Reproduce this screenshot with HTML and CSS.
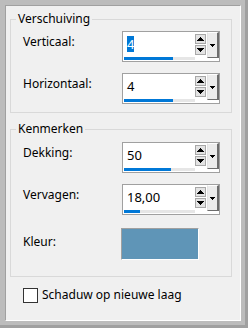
FILE: index.html
```html
<!DOCTYPE html>
<html lang="nl">
<head>
  <meta charset="UTF-8">
  <title>Slagschaduw</title>
  <link rel="stylesheet" href="styles.css">
</head>
<body>
  <div class="window">
    <div class="panel">

      <fieldset class="group">
        <legend>Verschuiving</legend>
        <div class="rows">
          <div class="row">
            <label class="label">Verticaal:</label>
            <div class="spin">
              <div class="field">
                <span class="value selected">4</span>
                <div class="track"><div class="fill" style="width: 49px;"></div></div>
              </div>
              <div class="arrows">
                <span class="arrow"><svg width="7" height="4" viewBox="0 0 7 4"><path d="M3 0h1v1h1v1h1v1h1v1H0V3h1V2h1V1h1z"/></svg></span>
                <span class="arrow"><svg width="7" height="4" viewBox="0 0 7 4"><path d="M0 0h7v1H6v1H5v1H4v1H3V3H2V2H1V1H0z"/></svg></span>
              </div>
              <span class="drop"><svg width="5" height="3" viewBox="0 0 5 3"><path d="M0 0h5v1H4v1H3v1H2V2H1V1H0z"/></svg></span>
            </div>
          </div>
          <div class="row">
            <label class="label">Horizontaal:</label>
            <div class="spin">
              <div class="field">
                <span class="value">4</span>
                <div class="track"><div class="fill" style="width: 49px;"></div></div>
              </div>
              <div class="arrows">
                <span class="arrow"><svg width="7" height="4" viewBox="0 0 7 4"><path d="M3 0h1v1h1v1h1v1h1v1H0V3h1V2h1V1h1z"/></svg></span>
                <span class="arrow"><svg width="7" height="4" viewBox="0 0 7 4"><path d="M0 0h7v1H6v1H5v1H4v1H3V3H2V2H1V1H0z"/></svg></span>
              </div>
              <span class="drop"><svg width="5" height="3" viewBox="0 0 5 3"><path d="M0 0h5v1H4v1H3v1H2V2H1V1H0z"/></svg></span>
            </div>
          </div>
        </div>
      </fieldset>

      <fieldset class="group group-second">
        <legend>Kenmerken</legend>
        <div class="rows rows-second">
          <div class="row">
            <label class="label">Dekking:</label>
            <div class="spin">
              <div class="field">
                <span class="value">50</span>
                <div class="track"><div class="fill" style="width: 47px;"></div></div>
              </div>
              <div class="arrows">
                <span class="arrow"><svg width="7" height="4" viewBox="0 0 7 4"><path d="M3 0h1v1h1v1h1v1h1v1H0V3h1V2h1V1h1z"/></svg></span>
                <span class="arrow"><svg width="7" height="4" viewBox="0 0 7 4"><path d="M0 0h7v1H6v1H5v1H4v1H3V3H2V2H1V1H0z"/></svg></span>
              </div>
              <span class="drop"><svg width="5" height="3" viewBox="0 0 5 3"><path d="M0 0h5v1H4v1H3v1H2V2H1V1H0z"/></svg></span>
            </div>
          </div>
          <div class="row">
            <label class="label">Vervagen:</label>
            <div class="spin">
              <div class="field">
                <span class="value">18,00</span>
                <div class="track"><div class="fill" style="width: 16px;"></div></div>
              </div>
              <div class="arrows">
                <span class="arrow"><svg width="7" height="4" viewBox="0 0 7 4"><path d="M3 0h1v1h1v1h1v1h1v1H0V3h1V2h1V1h1z"/></svg></span>
                <span class="arrow"><svg width="7" height="4" viewBox="0 0 7 4"><path d="M0 0h7v1H6v1H5v1H4v1H3V3H2V2H1V1H0z"/></svg></span>
              </div>
              <span class="drop"><svg width="5" height="3" viewBox="0 0 5 3"><path d="M0 0h5v1H4v1H3v1H2V2H1V1H0z"/></svg></span>
            </div>
          </div>
          <div class="row row-color">
            <label class="label label-color">Kleur:</label>
            <span class="swatch"></span>
          </div>
        </div>
      </fieldset>

      <label class="check">
        <span class="box"></span>
        <span>Schaduw op nieuwe laag</span>
      </label>

    </div>
  </div>
</body>
</html>
```

FILE: styles.css
```css
body {
  margin: 0;
  font-family: "Noto Sans", sans-serif;
  font-size: 12px;
  color: #000;
}
.window {
  width: 248px;
  height: 328px;
  box-sizing: border-box;
  padding: 5px 7px 7px 5px;
  background: #bcbcbc;
  box-shadow: inset -3px -3px 0 #a0a0a0;
}
.panel {
  height: 100%;
  box-sizing: border-box;
  background: #f0f0f0;
  border: 1px solid;
  border-color: #a0a0a0 #fff #fff #a0a0a0;
}
.group {
  margin: 5px 8px 0 4px;
  padding: 0;
  border: 1px solid #d9d9d9;
  min-width: 0;
}
.group legend {
  margin-left: 5px;
  padding: 0 2px;
  line-height: 16px;
}
.group-second {
  margin-top: 8px;
}
.rows {
  display: flex;
  flex-direction: column;
  gap: 11px;
  padding: 4px 0 8px 12px;
}
.rows-second {
  padding-top: 5px;
  padding-bottom: 16px;
}
.row {
  display: flex;
  align-items: flex-start;
  height: 31px;
}
.label {
  width: 99px;
  margin-top: 3px;
  line-height: 16px;
}
.row-color {
  height: 32px;
  margin-top: 2px;
}
.label-color {
  width: 98px;
  margin-top: 6px;
}
.swatch {
  width: 78px;
  height: 32px;
  box-sizing: border-box;
  background: #5f95b7;
  border: 1px solid;
  border-color: #a0a0a0 #fff #fff #a0a0a0;
}

/* spin box with slider bar and drop button */
.spin {
  display: flex;
  width: 98px;
  height: 31px;
  box-sizing: border-box;
  border: 1px solid #a0a0a0;
  background: #fff;
}
.field {
  width: 72px;
}
.value {
  display: inline-block;
  margin: 4px 0 0 4px;
  font-size: 13px;
  line-height: 16px;
}
.value.selected {
  background: #0078d7;
  color: #fff;
}
.track {
  width: 71px;
  height: 3px;
  margin: 4px 0 0 1px;
  background: #e6e6e6;
}
.fill {
  height: 100%;
  background: #0078d7;
}
.arrows {
  display: flex;
  flex-direction: column;
  gap: 1px;
  margin-top: 2px;
}
.arrow {
  display: flex;
  align-items: center;
  justify-content: center;
  width: 11px;
  height: 10px;
  box-sizing: border-box;
  border: 1px solid #a8a8a8;
  background: #e3e3e3;
}
.drop {
  display: flex;
  align-items: center;
  justify-content: center;
  width: 12px;
  height: 26px;
  margin-left: 1px;
  box-sizing: border-box;
  border-style: solid;
  border-width: 1px 2px 1px 1px;
  border-color: #fff #6d6d6d #6d6d6d #e3e3e3;
  background: #ececec;
}

.check {
  display: flex;
  align-items: center;
  gap: 4px;
  margin: 10px 0 0 17px;
  line-height: 16px;
}
.check .box {
  width: 15px;
  height: 15px;
  box-sizing: border-box;
  border: 1px solid #333;
  background: #fff;
}
```
